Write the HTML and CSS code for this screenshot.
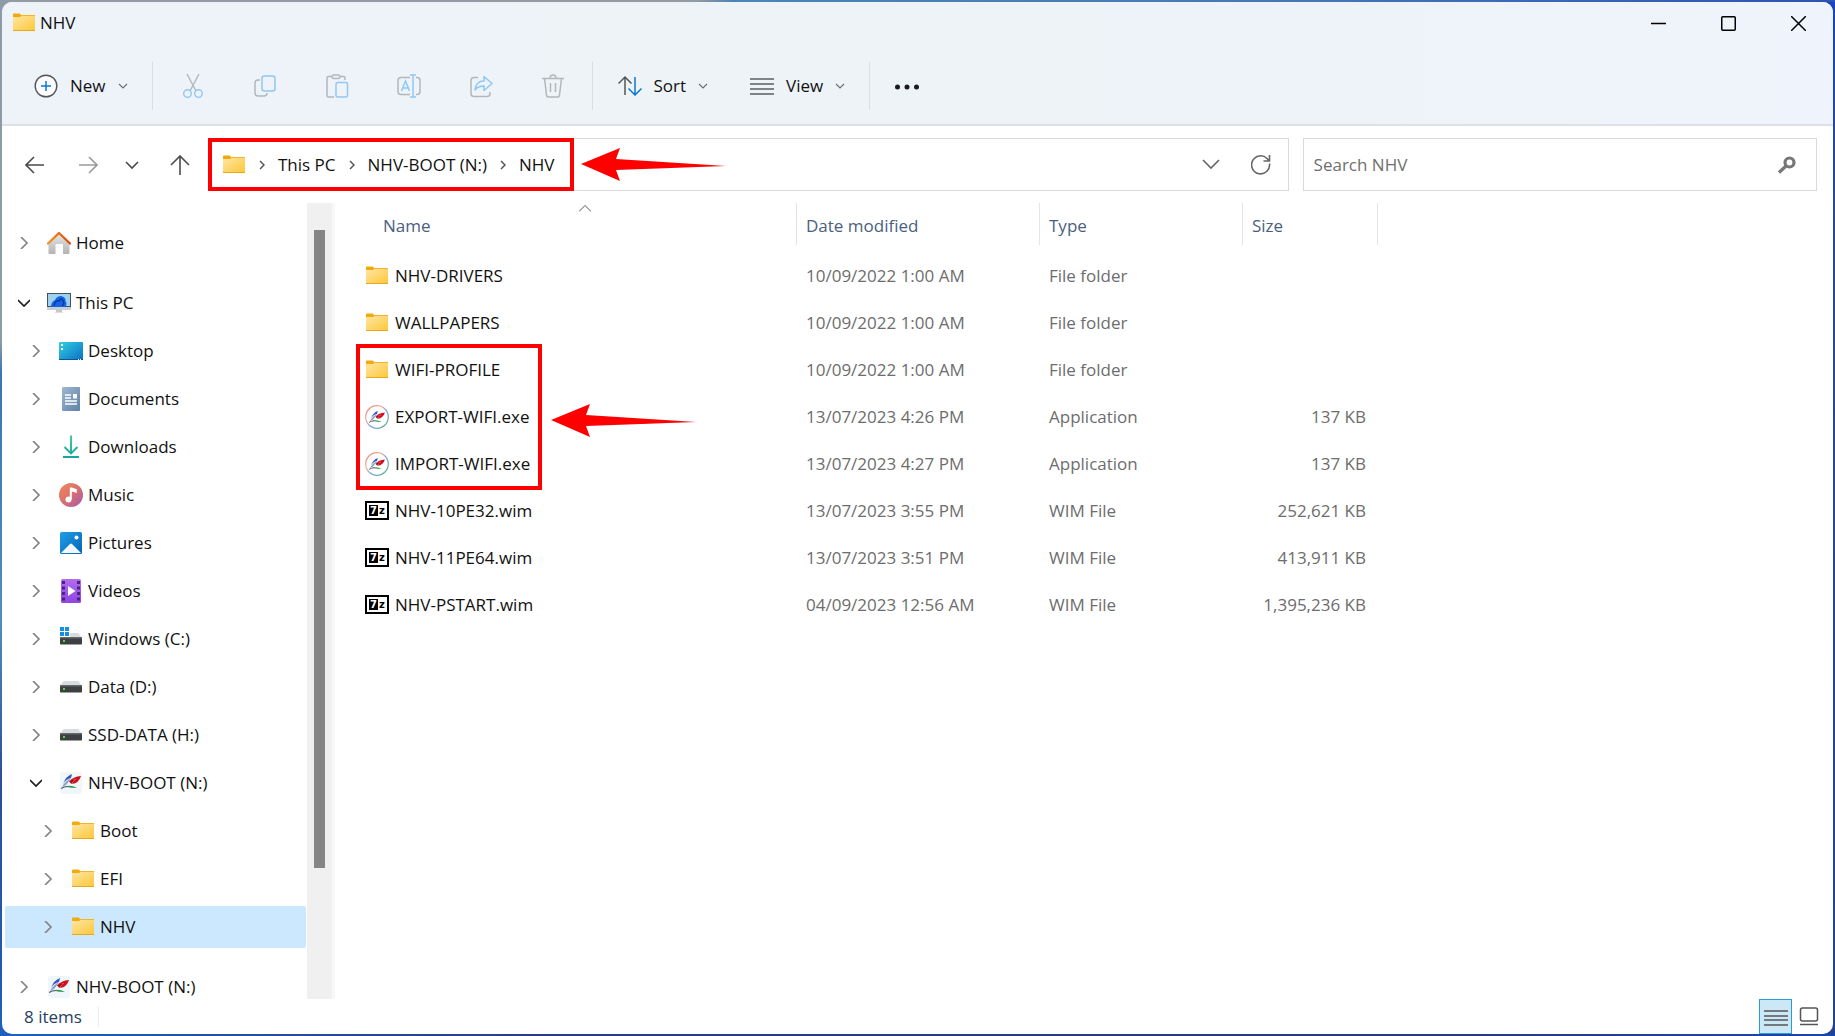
FILE: index.html
```html
<!DOCTYPE html>
<html lang="en">
<head>
<meta charset="utf-8">
<meta name="viewport" content="width=device-width, initial-scale=1">
<title>NHV</title>
<link rel="stylesheet" href="styles.css">
</head>
<body>
<svg class="sprite" aria-hidden="true">
  <defs>
    <linearGradient id="g-folder" x1="0" y1="0" x2="1" y2="1"><stop offset="0" stop-color="#ffe6a3"/><stop offset="1" stop-color="#fdc83c"/></linearGradient>
    <linearGradient id="g-roof" x1="0" y1="0" x2="1" y2="0"><stop offset="0" stop-color="#f7921e"/><stop offset="1" stop-color="#d9480b"/></linearGradient>
    <linearGradient id="g-wall" x1="0" y1="0" x2="0" y2="1"><stop offset="0" stop-color="#e6e6e6"/><stop offset="1" stop-color="#b4b4b4"/></linearGradient>
    <linearGradient id="g-desk" x1="0" y1="0" x2="1" y2="1"><stop offset="0" stop-color="#2fd0e0"/><stop offset="1" stop-color="#0d6fc4"/></linearGradient>
    <linearGradient id="g-doc" x1="0" y1="0" x2="1" y2="1"><stop offset="0" stop-color="#9fb8d3"/><stop offset="1" stop-color="#5f80a6"/></linearGradient>
    <linearGradient id="g-down" x1="0" y1="0" x2="0" y2="24" gradientUnits="userSpaceOnUse"><stop offset="0" stop-color="#35c98f"/><stop offset="1" stop-color="#12a59c"/></linearGradient>
    <linearGradient id="g-music" x1="0" y1="0" x2="1" y2="1"><stop offset="0" stop-color="#f18a55"/><stop offset=".5" stop-color="#d9706f"/><stop offset="1" stop-color="#a25ab0"/></linearGradient>
    <linearGradient id="g-pic" x1="0" y1="0" x2="1" y2="1"><stop offset="0" stop-color="#1ba0e8"/><stop offset="1" stop-color="#0a62b5"/></linearGradient>
    <linearGradient id="g-vid" x1="0" y1="0" x2="0" y2="1"><stop offset="0" stop-color="#b26bf0"/><stop offset="1" stop-color="#8f45e0"/></linearGradient>
    <linearGradient id="g-ring" x1="0" y1="0" x2="1" y2="1"><stop offset="0" stop-color="#f0776c"/><stop offset=".35" stop-color="#f3b49a"/><stop offset=".55" stop-color="#7fa6ee"/><stop offset="1" stop-color="#57b56a"/></linearGradient>
  </defs>
  <symbol id="folder" viewBox="0 0 24 24"><path d="M1 3.500q0-1 1-1h5.500q1 0 1.500 1.500H9v4H1z" fill="#f2a90c"/><path d="M1 6h7l2-1.500h13V19H1z" fill="url(#g-folder)"/><path d="M8.500 4.500H23" stroke="#f3b42a"/><path d="M1 19.500h22" stroke="#e8a81c"/></symbol>
  <symbol id="home" viewBox="0 0 24 24"><path d="M1.500 12.500 12 3l10.500 9.500V22q0 1-1 1H16v-9q0-1-1-1H9.500q-1 0-1 1v9h-6q-1 0-1-1z" fill="url(#g-wall)"/><path d="M1 12.500 12 2l11 10.500" fill="none" stroke="url(#g-roof)" stroke-width="2.400" stroke-linecap="round" stroke-linejoin="round"/></symbol>
  <symbol id="pc" viewBox="0 0 24 24"><path d="M9 18h6v3.500H9z" fill="#c3c7cb"/><path d="M8 21h8v1H8z" fill="#dcdfe1"/><path d="M0 2h24v17H0z" fill="#44545e"/><path d="M1 3h22v12H1z" fill="#9fd0ec"/><path d="M0 16h24v3H0z" fill="#c9d0d5"/><path d="M4 16q0-5 4-7 2-4 6-4 5 1 4.500 5 2 3 0 6z" fill="#1664e6"/><path d="M7 15q1-6 5-5 3-4 4 0 2 2-1 5" fill="none" stroke="#063aa5" stroke-width="1.500"/></symbol>
  <symbol id="desktop" viewBox="0 0 24 24"><rect y="3" width="24" height="18" rx="1" fill="url(#g-desk)"/><path d="M0 20h24v1H0z" fill="#0d5596"/><path d="M2 5h2v2H2zM2 9h2v2H2z" fill="#fff"/><path d="M19 20h1v1h-1zM21 20h1v1h-1z" fill="#fff"/></symbol>
  <symbol id="documents" viewBox="0 0 24 24"><rect x="3" width="18" height="24" rx="1" fill="url(#g-doc)"/><path d="M6 8h6M6 11h6M6 14h12M6 17h12" stroke="#fff" stroke-width="1.300"/><path d="M14 7h4v4.500h-4z" fill="#fff"/></symbol>
  <symbol id="downloads" viewBox="0 0 24 24"><path d="M12 .500V18M5.500 12l6.500 6.500L18.500 12M4 22h16" fill="none" stroke="url(#g-down)" stroke-width="1.900"/></symbol>
  <symbol id="music" viewBox="0 0 24 24"><circle cx="12" cy="12" r="12" fill="url(#g-music)"/><circle cx="9.500" cy="16.500" r="3" fill="#fff"/><path d="M10.800 4.500h2l5 1.700V10l-5-1.500v8h-2z" fill="#fff"/></symbol>
  <symbol id="pictures" viewBox="0 0 24 24"><rect x="1" y="1" width="22" height="22" rx="1.500" fill="url(#g-pic)"/><circle cx="17.500" cy="6.500" r="2" fill="#fff"/><path d="m2 22 9-9q1-1 2 0l9 9z" fill="#f3f7fb"/></symbol>
  <symbol id="videos" viewBox="0 0 24 24"><rect x="2" width="20" height="24" rx="1.500" fill="url(#g-vid)"/><path d="M4.500 2v20M19.500 2v20" stroke="#4c2382" stroke-width="3" stroke-dasharray="3 2.500"/><path d="m9 7 7.500 5L9 17z" fill="#fff"/></symbol>
  <symbol id="drive" viewBox="0 0 24 24"><path d="M4.500 6h15L23 11H1z" fill="#d9dcdf"/><rect x="1" y="10" width="22" height="7.500" rx=".800" fill="#3d3f41"/><path d="M1 10h22v1.500H1z" fill="#65686a"/><path d="M4 13h2v2H4z" fill="#3de03a"/></symbol>
  <symbol id="windrive" viewBox="0 0 24 24"><path d="M4.500 6h15L23 11H1z" fill="#d9dcdf"/><rect x="1" y="10" width="22" height="7.500" rx=".800" fill="#3d3f41"/><path d="M1 10h22v1.500H1z" fill="#65686a"/><path d="M4 13h2v2H4z" fill="#3de03a"/><path d="M0 0h11v10H0z" fill="#fff"/><path d="M1 0h4v4H1zM6 0h4v4H6zM1 5h4v4H1zM6 5h4v4H6z" fill="#148fe0"/></symbol>
  <symbol id="swoosh" viewBox="0 0 24 24"><path d="M4 13q3-8 9-10l-1 4Q7 8 4 13z" fill="#2c56c9"/><path d="M10 10.500q4-5 12-5.500-2 7-9 8 1.500-4 4-5-4 .500-7 2.500z" fill="#d40f1d"/><path d="M10 10.500q2-2 6-2.500l-3.500 5z" fill="#a80d1b"/><path d="M3 16q4-7 9-8.500l-5 6.500z" fill="#8b9cbf"/><path d="M6 15.500q6-2 12 1.500-6 0-12-1.500z" fill="#2f9b50"/><path d="M2 17.500q3-2 7-2" fill="none" stroke="#556" stroke-width="1.200"/></symbol>
  <symbol id="appdrive" viewBox="0 0 24 24"><rect x="1" y="1" width="22" height="22" rx="3" fill="#f0f7fb"/><use href="#swoosh" width="24" height="24"/></symbol>
  <symbol id="app" viewBox="0 0 24 24"><circle cx="12" cy="12" r="11.300" fill="#fff" stroke="url(#g-ring)" stroke-width="1.200"/><use href="#swoosh" x="2.500" y="3.500" width="19" height="19"/></symbol>
  <symbol id="right" viewBox="0 0 12 12"><path d="m3 0 6 6-6 6" fill="none" stroke="#858585" stroke-width="1.700"/></symbol>
  <symbol id="down" viewBox="0 0 12 12"><path d="m0 3 6 6 6-6" fill="none" stroke="#222" stroke-width="1.700"/></symbol>
  <symbol id="crumb" viewBox="0 0 6 10"><path d="m1 1 4 4-4 4" fill="none" stroke="#555" stroke-width="1.500"/></symbol>
  <symbol id="menu" viewBox="0 0 10 10"><path d="m1 3 4 4 4-4" fill="none" stroke="#6b6d70" stroke-width="1.100"/></symbol>
  <symbol id="arrow" viewBox="0 0 145 33"><path d="m0 16 39-16-4 11 110 7-110 4 4 11z" fill="#f00"/></symbol>
</svg>

<main class="window">
  <header class="top">
    <div class="titlebar">
      <svg class="icon"><use href="#folder"/></svg>
      <h1 class="title">NHV</h1>
      <div class="controls">
        <button class="control" aria-label="Minimize"><svg class="glyph" viewBox="0 0 15 15"><path d="M0 7.500h15"/></svg></button>
        <button class="control" aria-label="Maximize"><svg class="glyph" viewBox="0 0 15 15"><rect x=".750" y=".750" width="13.500" height="13.500" rx="1"/></svg></button>
        <button class="control" aria-label="Close"><svg class="glyph" viewBox="0 0 15 15"><path d="m0 0 15 15M15 0 0 15"/></svg></button>
      </div>
    </div>
    <div class="toolbar">
      <button class="command">
        <svg class="icon" viewBox="0 0 24 24" fill="none"><circle cx="12" cy="12" r="10.800" fill="#fafcfe" stroke="#555" stroke-width="1.400"/><path d="M12 7v10M7 12h10" stroke="#0a78d0" stroke-width="1.500"/></svg>
        New
        <svg class="caret"><use href="#menu"/></svg>
      </button>
      <span class="divider"></span>
      <button class="tool" aria-label="Cut" disabled><svg class="icon" viewBox="0 0 24 24" fill="none" stroke-width="1.400"><path d="m6 0 9 17M18 0 9 17" stroke="#b3b7ba"/><circle cx="6.500" cy="19.500" r="3.800" stroke="#90c8f3"/><circle cx="17.500" cy="19.500" r="3.800" stroke="#90c8f3"/></svg></button>
      <button class="tool" aria-label="Copy" disabled><svg class="icon" viewBox="0 0 24 24" fill="none" stroke-width="1.500"><path d="M7 6H5q-3 0-3 3v10q0 3 3 3h6q3 0 3-3" stroke="#b3b7ba"/><rect x="9" y="2" width="13" height="15" rx="2.500" stroke="#90c8f3"/></svg></button>
      <button class="tool" aria-label="Paste" disabled><svg class="icon" viewBox="0 0 24 24" fill="none" stroke-width="1.500"><path d="M9 23H3.500q-1.500 0-1.500-1.500V4q0-1.500 1.500-1.500H7M15 2.500h3.500Q20 2.500 20 4v2" stroke="#b3b7ba"/><rect x="7" y="1" width="8" height="3.500" rx="1.700" stroke="#b3b7ba"/><rect x="11" y="8.500" width="11.500" height="14.500" rx="1.500" stroke="#90c8f3"/></svg></button>
      <button class="tool" aria-label="Rename" disabled><svg class="icon" viewBox="0 0 24 24" fill="none" stroke-width="1.500"><path d="M13 3.500H4q-3 0-3 3v11q0 3 3 3h9M19 3.500h1q3 0 3 3v11q0 3-3 3h-1" stroke="#b3b7ba"/><path d="M16 1v22M13 1h6M13 23h6M4.500 17 8.500 7l4 10M6 14h5" stroke="#90c8f3"/></svg></button>
      <button class="tool" aria-label="Share" disabled><svg class="icon" viewBox="0 0 24 24" fill="none" stroke-width="1.500"><path d="M9 3.500H5q-3 0-3 3v13q0 3 3 3h13q3 0 3-3V18" stroke="#b3b7ba"/><path d="M6 16q1-9 9-9V2.500l8 7-8 7V12q-6 0-9 4z" stroke="#90c8f3" stroke-linejoin="round"/></svg></button>
      <button class="tool" aria-label="Delete" disabled><svg class="icon" viewBox="0 0 24 24" fill="none" stroke="#b3b7ba" stroke-width="1.500"><path d="M1 4.500h22M9 4.500Q9 1 12 1t3 3.500M3.500 4.500l2 16.500q0 2 2 2h9q2 0 2-2l2-16.500M9.500 9v9M14.500 9v9"/></svg></button>
      <span class="divider"></span>
      <button class="command">
        <svg class="icon" viewBox="0 0 24 24" fill="none" stroke-width="1.500"><path d="M7 21V3M.500 9.500 7 3l6.500 6.500" stroke="#555"/><path d="M17 3v18M10.500 14.500 17 21l6.500-6.500" stroke="#0a78d0"/></svg>
        Sort
        <svg class="caret"><use href="#menu"/></svg>
      </button>
      <button class="command">
        <svg class="icon" viewBox="0 0 24 24" stroke="#5b5d60" stroke-width="1.500"><path d="M0 5h24M0 10h24M0 15h24M0 20h24"/></svg>
        View
        <svg class="caret"><use href="#menu"/></svg>
      </button>
      <span class="divider"></span>
      <button class="command" aria-label="See more"><svg class="icon" viewBox="0 0 24 24" fill="#1b1b1b"><circle cx="2.500" cy="13" r="2.500"/><circle cx="12" cy="13" r="2.500"/><circle cx="21.500" cy="13" r="2.500"/></svg></button>
    </div>
  </header>

  <div class="navbar">
    <button class="nav" aria-label="Back"><svg class="navicon" viewBox="0 0 20 20" stroke="#4b4b4b"><path d="M19 10H1M9 2l-8 8 8 8"/></svg></button>
    <button class="nav" aria-label="Forward"><svg class="navicon" viewBox="0 0 20 20" stroke="#9a9a9a"><path d="M1 10h18M11 2l8 8-8 8"/></svg></button>
    <button class="nav recent" aria-label="Recent locations"><svg class="navicon" viewBox="0 0 20 20" stroke="#4b4b4b"><path d="m4 7 6 6 6-6"/></svg></button>
    <button class="nav" aria-label="Up"><svg class="navicon" viewBox="0 0 20 20" stroke="#4b4b4b"><path d="M10 20V1M1 10l9-9 9 9"/></svg></button>
    <div class="address">
      <nav class="crumbs" aria-label="Path">
        <svg class="icon"><use href="#folder"/></svg>
        <svg class="sep"><use href="#crumb"/></svg>
        <a class="crumb" href="#">This PC</a>
        <svg class="sep"><use href="#crumb"/></svg>
        <a class="crumb" href="#">NHV-BOOT (N:)</a>
        <svg class="sep"><use href="#crumb"/></svg>
        <a class="crumb" href="#">NHV</a>
        <svg class="pointer path-pointer" viewBox="0 0 145 33"><use href="#arrow"/></svg>
      </nav>
      <button class="plain" aria-label="Previous locations"><svg class="navicon" viewBox="0 0 20 20" stroke="#666"><path d="m2 5 8 8 8-8"/></svg></button>
      <button class="plain" aria-label="Refresh"><svg class="navicon" viewBox="0 0 20 20" stroke="#666"><path d="M18.500 8.500A9 9 0 1 1 16 3.500l2 2M18.500 0v6h-6"/></svg></button>
    </div>
    <form class="search">
      <input class="query" type="search" placeholder="Search NHV" aria-label="Search NHV">
      <button class="plain" type="button" aria-label="Search"><svg class="magnifier" viewBox="0 0 18 18" fill="none" stroke="#777"><circle cx="11.500" cy="6.500" r="4.500" stroke-width="3.200"/><path d="m8 10-7 6.500" stroke-width="3.200"/></svg></button>
    </form>
  </div>

  <div class="body">
    <aside class="sidebar">
      <ul class="tree">
        <li><a class="node root" href="#"><svg class="twist"><use href="#right"/></svg><svg class="icon"><use href="#home"/></svg>Home</a></li>
        <li class="group"><a class="node root" href="#"><svg class="twist"><use href="#down"/></svg><svg class="icon"><use href="#pc"/></svg>This PC</a></li>
        <li><a class="node child" href="#"><svg class="twist"><use href="#right"/></svg><svg class="icon"><use href="#desktop"/></svg>Desktop</a></li>
        <li><a class="node child" href="#"><svg class="twist"><use href="#right"/></svg><svg class="icon"><use href="#documents"/></svg>Documents</a></li>
        <li><a class="node child" href="#"><svg class="twist"><use href="#right"/></svg><svg class="icon"><use href="#downloads"/></svg>Downloads</a></li>
        <li><a class="node child" href="#"><svg class="twist"><use href="#right"/></svg><svg class="icon"><use href="#music"/></svg>Music</a></li>
        <li><a class="node child" href="#"><svg class="twist"><use href="#right"/></svg><svg class="icon"><use href="#pictures"/></svg>Pictures</a></li>
        <li><a class="node child" href="#"><svg class="twist"><use href="#right"/></svg><svg class="icon"><use href="#videos"/></svg>Videos</a></li>
        <li><a class="node child" href="#"><svg class="twist"><use href="#right"/></svg><svg class="icon"><use href="#windrive"/></svg>Windows (C:)</a></li>
        <li><a class="node child" href="#"><svg class="twist"><use href="#right"/></svg><svg class="icon"><use href="#drive"/></svg>Data (D:)</a></li>
        <li><a class="node child" href="#"><svg class="twist"><use href="#right"/></svg><svg class="icon"><use href="#drive"/></svg>SSD-DATA (H:)</a></li>
        <li><a class="node child" href="#"><svg class="twist"><use href="#down"/></svg><svg class="icon"><use href="#appdrive"/></svg>NHV-BOOT (N:)</a></li>
        <li><a class="node grandchild" href="#"><svg class="twist"><use href="#right"/></svg><svg class="icon"><use href="#folder"/></svg>Boot</a></li>
        <li><a class="node grandchild" href="#"><svg class="twist"><use href="#right"/></svg><svg class="icon"><use href="#folder"/></svg>EFI</a></li>
        <li><a class="node grandchild selected" href="#" aria-current="true"><svg class="twist"><use href="#right"/></svg><svg class="icon"><use href="#folder"/></svg>NHV</a></li>
        <li class="group"><a class="node root" href="#"><svg class="twist"><use href="#right"/></svg><svg class="icon"><use href="#appdrive"/></svg>NHV-BOOT (N:)</a></li>
      </ul>
      <div class="track"><div class="thumb"></div></div>
    </aside>

    <section class="files">
      <div class="listing">
      <table class="table">
        <colgroup><col class="col-name"><col class="col-date"><col class="col-type"><col class="col-size"></colgroup>
        <thead>
          <tr>
            <th aria-sort="ascending"><button class="heading name">Name<svg class="sorted" viewBox="0 0 12 7"><path d="m0 6.500 6-6 6 6" fill="none" stroke="#555"/></svg></button></th>
            <th><button class="heading">Date modified</button></th>
            <th><button class="heading">Type</button></th>
            <th><button class="heading last">Size</button></th>
          </tr>
        </thead>
        <tbody>
          <tr><td><span class="file"><svg class="icon"><use href="#folder"/></svg>NHV-DRIVERS</span></td><td>10/09/2022 1:00 AM</td><td>File folder</td><td></td></tr>
          <tr><td><span class="file"><svg class="icon"><use href="#folder"/></svg>WALLPAPERS</span></td><td>10/09/2022 1:00 AM</td><td>File folder</td><td></td></tr>
          <tr><td><span class="file"><svg class="icon"><use href="#folder"/></svg>WIFI-PROFILE</span></td><td>10/09/2022 1:00 AM</td><td>File folder</td><td></td></tr>
          <tr><td><span class="file"><svg class="icon"><use href="#app"/></svg>EXPORT-WIFI.exe</span></td><td>13/07/2023 4:26 PM</td><td>Application</td><td>137 KB</td></tr>
          <tr><td><span class="file"><svg class="icon"><use href="#app"/></svg>IMPORT-WIFI.exe</span></td><td>13/07/2023 4:27 PM</td><td>Application</td><td>137 KB</td></tr>
          <tr><td><span class="file"><span class="archive" aria-hidden="true"><b class="seven">7</b>z</span>NHV-10PE32.wim</span></td><td>13/07/2023 3:55 PM</td><td>WIM File</td><td>252,621 KB</td></tr>
          <tr><td><span class="file"><span class="archive" aria-hidden="true"><b class="seven">7</b>z</span>NHV-11PE64.wim</span></td><td>13/07/2023 3:51 PM</td><td>WIM File</td><td>413,911 KB</td></tr>
          <tr><td><span class="file"><span class="archive" aria-hidden="true"><b class="seven">7</b>z</span>NHV-PSTART.wim</span></td><td>04/09/2023 12:56 AM</td><td>WIM File</td><td>1,395,236 KB</td></tr>
        </tbody>
      </table>
      <div class="marker"></div>
      <svg class="pointer file-pointer" viewBox="0 0 145 33"><use href="#arrow"/></svg>
      </div>
    </section>
  </div>

  <footer class="status">
    <span class="count">8 items</span>
    <div class="views">
      <button class="view active" aria-label="Details"><svg class="icon" viewBox="0 0 24 24" stroke="#555" stroke-width="1.700"><path d="M0 6h24M0 11h24M0 15h24M0 20h24"/></svg></button>
      <button class="view" aria-label="Large thumbnails"><svg class="icon" viewBox="0 0 24 24" fill="none" stroke="#555" stroke-width="1.500"><rect x="3.500" y="3" width="17" height="13" rx="2"/><path d="M3 19.500h18"/></svg></button>
    </div>
  </footer>
</main>
</body>
</html>
```
FILE: styles.css
```css
*, *::before, *::after { box-sizing: border-box; }

body {
  margin: 0;
  height: 100vh;
  padding: 2px;
  background:
    linear-gradient(90deg, #909ba3 38%, #4a84b8 40%, #4479b6 70%, #2c55b0) top / 100% 2px no-repeat,
    linear-gradient(90deg, #1d60bd, #2b3d7d 30%, #2b3a78 80%, #1b46ad) bottom / 100% 2px no-repeat,
    linear-gradient(#8b9ba8 33%, #3a76b3 36%, #4e8fb9 60%, #2c4f98 75%, #1d60bd) left / 50% 100% no-repeat,
    linear-gradient(#1645c0, #2a4796 20%, #24438f) right / 50% 100% no-repeat;
  font: 17px/24px "Open Sans", "Noto Sans", sans-serif;
  color: #111;
}

button, input { font: inherit; color: inherit; border: 0; background: none; padding: 0; margin: 0; }
button { display: flex; align-items: center; justify-content: center; }
a { color: inherit; text-decoration: none; }
ul { list-style: none; margin: 0; padding: 0; }
svg { display: block; flex: none; }

.sprite { position: absolute; width: 0; height: 0; }
.icon { width: 24px; height: 24px; }

.window {
  display: flex;
  flex-direction: column;
  height: 100%;
  border-radius: 10px;
  background: #fff;
  overflow: hidden;
}

/* Title bar and commands */
.top { background: linear-gradient(90deg, #eef3fa, #eef3f8 30%, #eef3f8 60%, #eff3fb); border-bottom: 2px solid #dde1e7; }
.titlebar { display: flex; align-items: center; height: 42px; padding-left: 10px; gap: 4px; }
.title { flex: 1; margin: 0; font-size: 17px; font-weight: 400; }
.controls { display: flex; }
.control { width: 70px; height: 42px; }
.glyph { width: 15px; height: 15px; fill: none; stroke: #000; stroke-width: 1.5; }

.toolbar { display: flex; align-items: center; height: 80px; padding: 4px 0 0 11px; }
.command { gap: 12px; height: 48px; padding: 0 21px; }
.caret { width: 10px; height: 10px; }
.tool { width: 72px; height: 48px; }
.divider { width: 1px; height: 48px; margin: 0 4px 0 3px; background: #dadfe4; }

/* Navigation row */
.navbar { display: flex; align-items: center; padding: 12px 16px 12px 6px; }
.nav { width: 53px; height: 40px; }
.recent { width: 36px; margin-right: 3px; }
.navicon { width: 20px; height: 20px; fill: none; stroke-width: 1.6; }
.address { display: flex; flex: 15 1 0; height: 53px; margin-left: 2px; border: 1px solid #d9d9d9; padding-right: 2px; }
.crumbs {
  position: relative;
  display: flex;
  align-items: center;
  gap: 13px;
  margin: -1px auto -1px -1px;
  padding: 0 16px 0 10px;
  border: 4px solid #f00;
}
.sep { width: 6px; height: 10px; }
.plain { width: 50px; }
.search { display: flex; flex: 7 1 0; height: 53px; margin-left: 14px; border: 1px solid #d9d9d9; padding-left: 10px; }
.query { flex: 1; min-width: 0; outline: 0; }
.query::placeholder { color: #6f6f6f; opacity: 1; }
.search .plain { width: 58px; }
.magnifier { width: 18px; height: 18px; }

/* Red call-outs laid over the page */
.pointer { position: absolute; width: 145px; height: 33px; }
.path-pointer { left: calc(100% + 11px); top: 6px; }
.marker { position: absolute; left: 21px; top: 141px; width: 186px; height: 146px; border: 4px solid #f00; }
.file-pointer { left: 216px; top: 201px; }

/* Folder tree */
.body { display: flex; flex: 1; min-height: 0; }
.sidebar { display: flex; width: 333px; border-right: 3px solid #f8f8f8; }
.tree { flex: 1; padding: 19px 1px 0 3px; overflow: hidden; }
.tree li { padding-bottom: 6px; }
.tree .group { padding-top: 12px; }
.node { display: flex; align-items: center; height: 42px; border-radius: 2px; }
.root { padding-left: 13px; }
.child { padding-left: 25px; }
.grandchild { padding-left: 37px; }
.selected { background: #cce8ff; }
.twist { width: 12px; height: 12px; margin-right: 17px; }
.node .icon { margin-right: 5px; }
.track { width: 25px; padding: 27px 7px 0; background: #f0f0f0; }
.thumb { height: 83%; background: #858585; }

/* File table */
.files { flex: 1; min-width: 0; overflow: hidden; }
.listing { position: relative; }
.table { table-layout: fixed; width: 1043px; border-collapse: collapse; }
.col-name { width: 461px; }
.col-date { width: 243px; }
.col-type { width: 203px; }
.col-size { width: 136px; }
.table th { height: 49px; padding: 0; vertical-align: top; font-weight: 400; color: #4a6080; }
.heading { position: relative; width: 100%; height: 42px; padding: 3px 0 0 9px; justify-content: flex-start; border-left: 1px solid #e4e4e4; }
.name { padding-left: 48px; border-left: 0; }
.last { border-right: 1px solid #e4e4e4; }
.sorted { position: absolute; left: 244px; top: 2px; width: 12px; height: 7px; }
.table td { height: 47px; padding: 0 0 0 10px; color: #6d6d6d; }
.table td:first-child { padding-left: 30px; color: #111; }
.table td:last-child { padding: 0 12px 0 0; text-align: right; }
.file { display: flex; align-items: center; gap: 6px; }
.archive {
  display: flex;
  align-items: center;
  justify-content: center;
  gap: 1px;
  width: 24px;
  height: 19px;
  border: 2px solid #000;
  background: #fff;
  color: #000;
  font: 700 10px/11px "DejaVu Sans", sans-serif;
}
.seven { width: 9px; background: #000; color: #fff; text-align: center; }

/* Status bar */
.status { display: flex; align-items: center; justify-content: space-between; height: 35px; padding: 0 8px 0 22px; color: #26405f; }
.count { padding-right: 16px; line-height: 20px; border-right: 1px solid #ebebeb; }
.views { display: flex; }
.view { width: 33px; height: 35px; }
.active { border: 1px solid #2b9bd8; background: #cce8f6; }
```
